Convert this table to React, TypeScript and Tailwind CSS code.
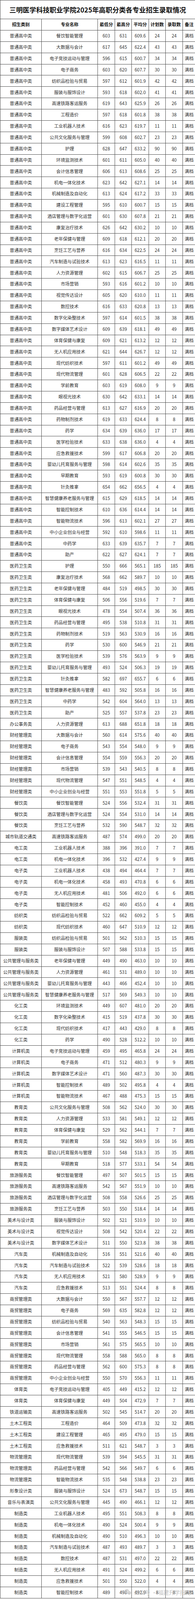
import { RiWechatFill } from "react-icons/ri";

const rows = `普通高中类|餐饮智能管理|603|631|609.6|24|24
普通高中类|大数据与会计|617|645|622.4|43|43
普通高中类|电子竞技运动与管理|596|615|600.7|34|34
普通高中类|电子商务|603|620|607.7|30|30
普通高中类|纺织品检验与贸易|597|612|601.9|42|42
普通高中类|服装与服饰设计|593|618|602.0|41|41
普通高中类|高速铁路客运服务|619|643|625.9|26|26
普通高中类|工程造价|597|618|601.8|38|38
普通高中类|工业机器人技术|616|623|619.7|11|11
普通高中类|公共文化服务与管理|599|608|602.7|23|23
普通高中类|护理|628|647|633.2|90|90
普通高中类|环境监测技术|601|611|605.0|40|40
普通高中类|会计信息管理|606|613|608.6|25|25
普通高中类|机电一体化技术|623|642|627.1|14|14
普通高中类|机械制造及自动化|613|624|617.2|33|33
普通高中类|建设工程管理|595|610|600.7|15|15
普通高中类|酒店管理与数字化运营|601|630|607.8|21|21
普通高中类|康复治疗技术|626|642|630.2|10|10
普通高中类|老年保健与管理|609|618|612.1|20|20
普通高中类|烹饪工艺与营养|616|634|622.5|24|24
普通高中类|汽车制造与试验技术|613|623|616.5|11|11
普通高中类|人力资源管理|602|615|606.7|25|25
普通高中类|市场营销|593|616|601.2|10|10
普通高中类|视觉传达设计|605|620|610.0|11|11
普通高中类|数控技术|616|633|620.8|13|13
普通高中类|数字化染整技术|597|614|601.5|38|38
普通高中类|数字媒体艺术设计|609|639|618.1|49|49
普通高中类|体育保健与康复|609|621|613.2|12|12
普通高中类|无人机应用技术|621|644|626.7|12|12
普通高中类|现代纺织技术|597|611|601.2|49|49
普通高中类|现代物流管理|601|628|606.5|22|22
普通高中类|学前教育|603|619|608.0|9|9
普通高中类|眼视光技术|630|642|633.1|14|14
普通高中类|药品经营与管理|613|627|616.9|20|20
普通高中类|药物制剂技术|619|633|624.4|8|8
普通高中类|药学|634|639|636.0|17|17
普通高中类|医学检验技术|633|638|636.0|4|4
普通高中类|应急救援技术|599|617|606.8|20|20
普通高中类|婴幼儿托育服务与管理|598|614|602.6|35|35
普通高中类|早期教育|593|619|600.8|30|30
普通高中类|针灸推拿|654|662|656.5|4|4
普通高中类|智慧健康养老服务与管理|615|629|618.5|14|14
普通高中类|智能控制技术|610|636|614.4|14|14
普通高中类|智能物流技术|596|613|602.1|27|27
普通高中类|中小企业创业与经营|592|610|598.6|11|11
普通高中类|中药学|633|639|635.7|7|7
普通高中类|助产|622|627|624.1|7|7
医药卫生类|护理|550|666|565.1|185|185
医药卫生类|康复治疗技术|568|662|589.7|10|10
医药卫生类|老年保健与管理|484|519|498.5|30|30
医药卫生类|体育保健与康复|506|556|519.6|7|7
医药卫生类|眼视光技术|478|554|507.4|36|36
医药卫生类|药品经营与管理|495|538|510.8|31|31
医药卫生类|药物制剂技术|519|563|530.9|16|16
医药卫生类|药学|530|600|546.9|21|21
医药卫生类|医学检验技术|539|576|563.9|9|9
医药卫生类|婴幼儿托育服务与管理|493|524|506.3|19|19
医药卫生类|针灸推拿|582|697|655.7|6|6
医药卫生类|智慧健康养老服务与管理|483|592|505.8|16|16
医药卫生类|中药学|542|604|564.0|13|13
医药卫生类|助产|525|557|537.8|23|23
办公事务类|人力资源管理|613|688|651.8|18|18
财经管理类|大数据与会计|560|614|575.6|40|40
财经管理类|电子商务|543|554|548.0|9|9
财经管理类|会计信息管理|554|559|556.3|20|20
财经管理类|市场营销|539|543|540.5|8|8
财经管理类|现代物流管理|547|551|548.5|4|4
财经管理类|中小企业创业与经营|551|553|551.8|5|5
餐饮类|餐饮智能管理|524|556|532.4|31|31
餐饮类|酒店管理与数字化运营|524|554|531.0|14|14
餐饮类|烹饪工艺与营养|532|590|548.7|32|32
城市轨道交通类|高速铁路客运服务|487|574|499.0|20|20
电工类|工业机器人技术|388|396|391.0|7|7
电工类|机电一体化技术|396|532|427.4|9|9
电子类|工业机器人技术|438|494|464.4|7|7
电子类|机电一体化技术|458|493|470.8|6|6
电子类|无人机应用技术|481|506|492.0|6|6
电子类|智能控制技术|452|460|455.0|4|4
纺织类|纺织品检验与贸易|522|662|609.2|5|5
纺织类|现代纺织技术|460|647|510.9|12|12
服装类|纺织品检验与贸易|501|562|510.3|15|15
服装类|服装与服饰设计|507|588|533.8|15|15
公共管理与服务类|老年保健与管理|449|490|463.0|10|10
公共管理与服务类|人力资源管理|461|531|489.0|10|10
公共管理与服务类|婴幼儿托育服务与管理|443|466|452.4|10|10
公共管理与服务类|智慧健康养老服务与管理|517|569|549.3|10|10
化工类|环境监测技术|449|607|481.0|20|20
化工类|数字化染整技术|415|519|437.8|30|30
化工类|现代纺织技术|417|443|429.0|8|8
化工类|药学|490|528|512.2|10|10
计算机类|电子竞技运动与管理|459|495|465.8|24|24
计算机类|电子商务|471|512|480.3|9|9
计算机类|数字媒体艺术设计|471|560|487.3|30|30
计算机类|智能控制技术|489|502|495.8|4|4
计算机类|智能物流技术|467|488|475.3|15|15
教育类|公共文化服务与管理|508|562|524.0|30|30
教育类|人力资源管理|533|581|549.1|12|12
教育类|体育保健与康复|529|562|544.1|7|7
教育类|学前教育|558|582|569.9|16|16
教育类|婴幼儿托育服务与管理|510|548|518.3|35|35
教育类|早期教育|518|577|533.1|54|54
旅游服务类|餐饮智能管理|497|507|501.5|15|15
旅游服务类|高速铁路客运服务|542|567|551.9|10|10
旅游服务类|酒店管理与数字化运营|508|558|526.6|25|25
旅游服务类|烹饪工艺与营养|503|550|518.4|14|14
美术与设计类|服装与服饰设计|502|521|510.9|10|10
美术与设计类|视觉传达设计|508|542|520.4|22|22
美术与设计类|数字媒体艺术设计|511|550|523.8|38|38
汽车类|机械制造及自动化|516|551|521.6|40|40
汽车类|汽车制造与试验技术|522|539|528.6|18|18
汽车类|无人机应用技术|521|580|528.9|9|9
汽车类|应急救援技术|513|551|524.4|8|8
商贸管理类|大数据与会计|550|567|557.7|12|12
商贸管理类|电子商务|569|635|582.8|12|12
商贸管理类|纺织品检验与贸易|540|563|548.3|15|15
商贸管理类|会计信息管理|541|555|546.5|15|15
商贸管理类|市场营销|561|575|565.5|10|10
商贸管理类|现代物流管理|558|588|565.0|8|8
商贸管理类|药品经营与管理|562|600|575.3|8|8
商贸管理类|中小企业创业与经营|550|570|556.3|11|11
体育类|电子竞技运动与管理|405|449|415.2|12|12
体育类|体育保健与康复|449|504|472.9|7|7
铁道运输类|高速铁路客运服务|502|545|514.7|20|20
土木工程类|工程造价|464|509|473.8|32|32
土木工程类|建设工程管理|465|495|479.0|15|15
土木工程类|应急救援技术|511|621|548.7|3|3
物流管理类|现代物流管理|539|594|545.5|31|31
物流管理类|药品经营与管理|542|566|549.7|6|6
物流管理类|智能物流技术|535|548|538.8|23|23
形象设计类|服装与服饰设计|524|673|548.7|15|15
音乐与表演类|公共文化服务与管理|445|490|466.1|12|12
制造类|工业机器人技术|495|551|508.3|8|8
制造类|机电一体化技术|490|524|500.4|9|9
制造类|机械制造及自动化|490|510|496.3|10|10
制造类|汽车制造与试验技术|487|493|489.7|3|3
制造类|数控技术|487|531|497.0|22|22
制造类|无人机应用技术|491|524|499.2|6|6
制造类|应急救援技术|501|550|522.0|4|4
制造类|智能控制技术|489|498|492.9|8|8`
  .split("\n")
  .map((line) => line.split("|"));

const headers = ["招生类别", "专业名称", "最低分", "最高分", "平均分", "计划数", "录取数", "备注"];

const grid = "grid grid-cols-[106px_144px_44px_43px_44px_43px_44px_32px] border-b border-[#4a4a4a]";
const cell = "flex items-center justify-center whitespace-nowrap border-r border-[#4a4a4a] last:border-r-0";

const App = () => {
  return (
    <div
      className="relative w-[500px] h-[4096px] overflow-hidden bg-white text-[#333]"
      style={{ fontFamily: '"Noto Sans CJK SC", "Noto Sans", sans-serif' }}
    >
      <div className="border-l border-[#4a4a4a]">
        <div className="flex h-[48.9px] items-center justify-center border-y border-[#4a4a4a] text-[17.2px] font-bold leading-none text-[#111]">
          三明医学科技职业学院2025年高职分类各专业招生录取情况
        </div>
        <div className={`${grid} h-[29.1px] text-[11.3px] font-bold leading-none text-[#111]`}>
          {headers.map((h) => (
            <div key={h} className={cell}>
              {h}
            </div>
          ))}
        </div>
        {rows.map((r, idx) => (
          <div key={idx} className={`${grid} h-[28.88px] text-[11.4px] leading-none`}>
            {r.map((v, i) => (
              <div key={i} className={cell}>
                {v}
              </div>
            ))}
            <div className={cell}>满档</div>
          </div>
        ))}
      </div>

      <div className="absolute left-[318px] top-[4066px] flex items-center gap-[6px] text-[14px] leading-none text-[#b5b5b5] opacity-80">
        <RiWechatFill className="w-[19px] h-[19px] text-[#c4c4c4]" />
        <span>公众号 · 福建升学指南</span>
      </div>
    </div>
  );
};

export default App;
